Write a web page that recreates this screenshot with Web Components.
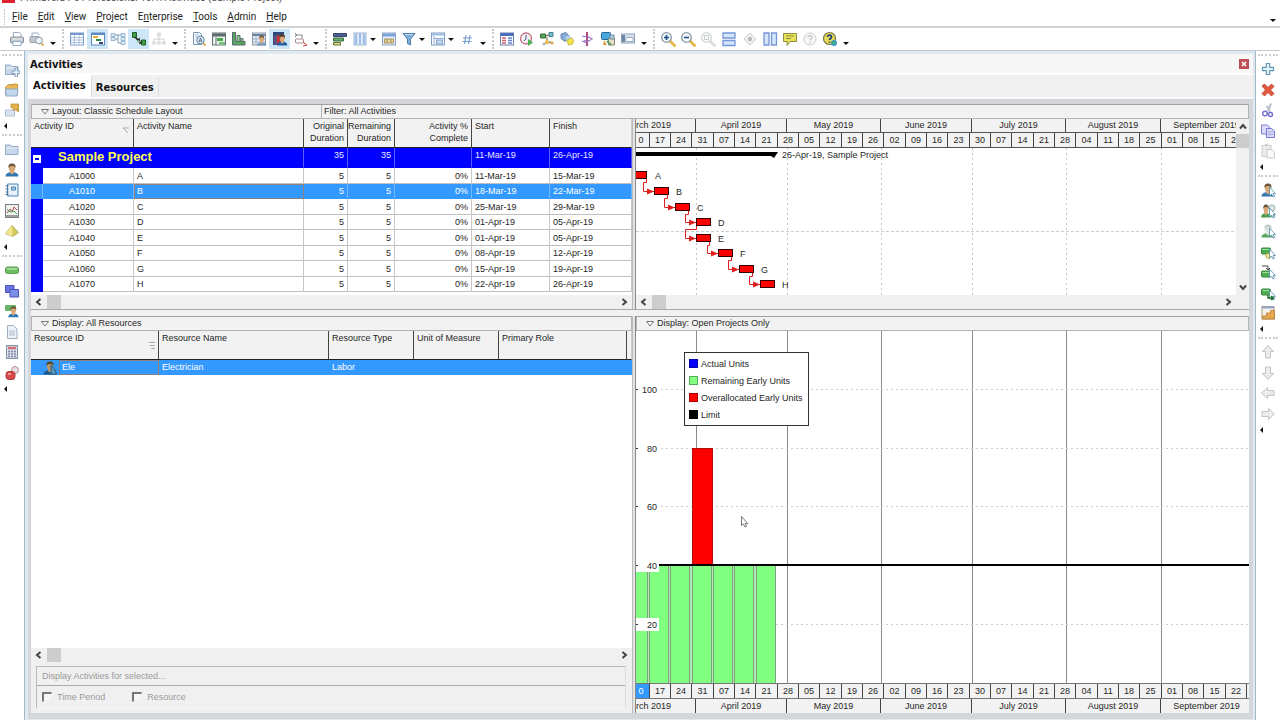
<!DOCTYPE html>
<html lang="en">
<head>
<meta charset="utf-8">
<title>Activities (Sample Project)</title>
<style>
html, body { margin: 0; height: 100%; background: #fff; overflow: hidden; }
body { font: 9px/12px "Liberation Sans", Arial, sans-serif; color: #262626; }
</style>
</head>
<body>
<p6-app></p6-app>
<script>
const define = (name, html, setup) => {
  const t = document.createElement('template');
  customElements.define(name, class extends HTMLElement {
    constructor() {
      super();
      t.innerHTML = t.innerHTML || html;
      this.attachShadow({ mode: 'open' }).append(t.content.cloneNode(true));
    }
    connectedCallback() { if (setup && !this.ready) { this.ready = true; setup(this, this.shadowRoot); } }
  });
};

/* ---------- icons, drawn on a 16 x 16 grid ---------- */
const person = (c = '#2f78b4', f = '#d9a878', h = '#6b5638') =>
  `<path d="M1.500 14.500c0-3 3-4.500 6.500-4.500s6.500 1.500 6.500 4.500z" fill="${c}"/><path d="M6 9h4v2l-2 1.500-2-1.500z" fill="${f}"/><ellipse cx="8" cy="6" rx="3.200" ry="4" fill="${f}"/><path d="M4.500 6C4 2.500 6 1.500 8 1.500s4 1 3.500 4.500C10.500 4 9 4 8 4S5 4.500 4.500 6z" fill="${h}"/>`;
const pointer = '<path d="M9.500 5v9l2-2 1.500 3 1.500-.8-1.400-2.700h2.400z" fill="#fff" stroke="#4a8ca8" stroke-width=".8"/>';
const lens = (c, inner, h = '#e6b84e') => `<path d="M10 10l4.500 4.500" stroke="${h}" stroke-width="3" stroke-linecap="round"/><circle cx="6.500" cy="6.500" r="4.800" fill="#f4fafc" stroke="${c}" stroke-width="1.300"/>${inner}`;
const folder = '<path d="M1.500 4h5l1.500 1.500h6v8h-12.500z" fill="#c8d8ea" stroke="#94aac4"/><path d="M2 7h12" stroke="#e8f0f8"/>';
const arrow = a => `<path transform="rotate(${a} 8 8)" d="M8 1.500l5.500 6h-3v6.500h-5v-6.500h-3z" fill="#ececec" stroke="#c2c2c2"/>`;
const green = '<rect x="1.500" y="4" width="9" height="6" rx="1" fill="#4cae50" stroke="#38843c"/><path d="M2.500 5.500h7" stroke="#a0e0a0"/>';
const ICONS = {
  print: '<path d="M4.500 6V1.500h6L12 3v3" fill="#fff" stroke="#9ab0c8"/><rect x="1.500" y="6" width="13" height="6" rx="1" fill="#c3c8ce" stroke="#8c949c"/><path d="M3 8h10" stroke="#f4f4f4"/><path d="M4 10.500h8v4H4z" fill="#fff" stroke="#8fb0cc"/>',
  preview: '<path d="M3 6V2h6l1 2" fill="#fff" stroke="#9ab0c8"/><rect x="1" y="5.500" width="9" height="6" rx="1" fill="#c3c8ce" stroke="#98a0a8"/><path d="M12 12l2.500 2.500" stroke="#e0b050" stroke-width="2"/><circle cx="10" cy="9.500" r="3.400" fill="#e8f3fa" stroke="#8898a8"/>',
  table: '<rect x="1.500" y="2" width="13" height="12" fill="#fff" stroke="#7c9ac8"/><path d="M2 3h12" stroke="#7898d0" stroke-width="2"/><path d="M2 6.500h12M2 9h12M2 11.500h12M5.500 4v10M10 4v10" stroke="#a9bfe0"/>',
  gantt: '<rect x="1.500" y="2" width="13" height="12" fill="#fff" stroke="#5d88c4"/><path d="M2 3h12" stroke="#5d88c4" stroke-width="2"/><path d="M3 6h5" stroke="#e0b030" stroke-width="2"/><path d="M6 9h5" stroke="#308848" stroke-width="2"/><path d="M9 12h4" stroke="#304878" stroke-width="2"/>',
  network: '<path d="M5 4h3v8h3M8 8H5M8 4h3" fill="none" stroke="#7da0bc"/><path d="M1 2.500h4v3H1zM1 6.500h4v3H1zM11 2.500h4v3h-4zM11 6.500h4v3h-4zM11 10.500h4v3h-4z" fill="#dceaf4" stroke="#88abc6" stroke-width=".8"/>',
  trace: '<path d="M1.500 1.500h4v5h-4z" fill="#41a048" stroke="#205c28"/><path d="M10.500 9h4v5h-4z" fill="#41a048" stroke="#205c28"/><path d="M4 6l3 3 1-1 1 4 2-1" stroke="#222" stroke-width="1.600" fill="none"/><path d="M5.500 11.500l2-3 2 3z" fill="#8cc890"/>',
  org: '<path d="M8 5v4M3 11V8h10v3M8 8v3" stroke="#d2d2d2" fill="none"/><path d="M6 1.500h4v4H6zM1 10.500h4v3H1zM6 10.500h4v3H6zM11 10.500h4v3h-4z" fill="#dedede"/>',
  finddoc: '<path d="M2.500 1.500h6l2 2v10h-8z" fill="#f4f8fc" stroke="#7898b8"/><path d="M4 4h4M4 6h2" stroke="#aac0d8"/><path d="M12 12l2.500 2.500" stroke="#e0b050" stroke-width="2"/><circle cx="9.500" cy="9" r="3.800" fill="#d8ecf8" stroke="#6080a0"/><path d="M8 11l1.500-4 1.500 4M8.500 10h2" stroke="#557" fill="none" stroke-width=".8"/>',
  sheet: '<rect x="1.500" y="2" width="13" height="12" fill="#e8f4e8" stroke="#687078"/><path d="M2 4h12" stroke="#606870" stroke-width="3"/><path d="M5 6v8" stroke="#687078"/><rect x="6" y="7" width="6" height="3" fill="#48a850"/><rect x="8" y="11" width="6" height="2.500" fill="#78c078"/>',
  hist: '<path d="M1.500 1.500h3v9h9.500v3.500H1.500z" fill="#58a860" stroke="#586870"/><path d="M6 4.500h3v6H6zM9.500 7.500h2.500v3H9.500z" fill="#88c890" stroke="#587068"/>',
  resuse: '<rect x="1.500" y="2" width="13" height="12" fill="#e4ecf4" stroke="#8896a8"/><path d="M2 4h12" stroke="#6880a0" stroke-width="2"/><path d="M5 5v9M2 8h12M2 11h12" stroke="#a8b4c4"/><g transform="translate(5 3) scale(.7 .8)">' + person('#789cc0') + '</g>',
  resprof: '<rect x="1.500" y="1.500" width="10" height="12" fill="#c03838" stroke="#304878"/><path d="M2 3h10" stroke="#304878" stroke-width="3"/><path d="M3.500 4v10" stroke="#3858a0" stroke-width="2"/><g transform="translate(4 2) scale(.78 .86)">' + person('#1f5fa8', '#d9a878', '#4b3a28') + '</g>',
  link: '<path d="M3 2l2 2-2 2M3 4h7v4" fill="none" stroke="#888"/><rect x="3.500" y="8" width="8" height="4" rx="1" fill="#fff" stroke="#a88"/><path d="M11 11l4 3-4 1" fill="none" stroke="#c44"/>',
  bars: '<path d="M1.500 2.500h13v3h-13z" fill="#4a5f98" stroke="#3a4468"/><path d="M1.500 7h10v3h-10z" fill="#62b068" stroke="#386840"/><path d="M1.500 11.500h7v2.500h-7z" fill="#e0e070" stroke="#687048"/>',
  cols: '<rect x="2" y="2" width="12" height="12" fill="#dce9f8" stroke="#98b4d4"/><path d="M4 3v10M8 3v10M12 3v10" stroke="#9cbce4" stroke-width="2"/>',
  timescale: '<rect x="1.500" y="2" width="13" height="12" fill="#e8ecf4" stroke="#8ea4c4"/><path d="M2 4h12" stroke="#7ca4dc" stroke-width="3"/><path d="M3.500 8h9v4h-9z" fill="#f4d888" stroke="#a89868"/><path d="M6 8v4M10 8v4" stroke="#888"/>',
  filter: '<path d="M2 2.500h12L9.500 8v6l-3-1.500V8z" fill="#7fb0d8" stroke="#4a7cac"/><path d="M4 3.500h8" stroke="#c4e0f4"/>',
  group: '<rect x="1.500" y="2" width="13" height="12" fill="#fff" stroke="#7c9cc4"/><path d="M2 3.500h12" stroke="#9cbce4" stroke-width="2"/><path d="M4 5v9M4 7.500h10" stroke="#8cacd4"/><rect x="6.500" y="9" width="6" height="4" fill="#c8dcf4" stroke="#7c9cc4"/>',
  hash: '<path d="M7 4L5.500 13M11 4L9.500 13M4 7h9M3.500 10.500H12.500" stroke="#6f9ccc" stroke-width="1.100"/>',
  dict: '<rect x="1.500" y="2" width="13" height="12" fill="#fff" stroke="#6880b0"/><path d="M2 3.500h12" stroke="#4a70b8" stroke-width="3"/><path d="M3 7h4M3 9.500h4M3 12h4" stroke="#d06070" stroke-width="1.500"/><path d="M9 7h4M9 9.500h4M9 12h4" stroke="#6080c8" stroke-width="1.500"/>',
  clock: '<circle cx="7" cy="7.500" r="5.500" fill="#f8ecf0" stroke="#c07080" stroke-width="1.300"/><path d="M7 4v4l-2 2" stroke="#3860a0" fill="none"/><path d="M9 8l5 3.500-5 3.500z" fill="#48b050"/>',
  level: '<path d="M3 5l9-1M8 6v6M4 13l8-2" stroke="#886" stroke-width="1.300"/><path d="M1.500 3h5v4h-5z" fill="#50a858" stroke="#386840"/><path d="M10 1.500h4v4h-4z" fill="#6cc0d8" stroke="#48808c"/><circle cx="8" cy="11" r="2" fill="#f0c050"/><circle cx="13" cy="12" r="1.500" fill="#d8a040"/><circle cx="5" cy="13" r="1.500" fill="#bbb"/>',
  light: '<path d="M2 3l5-1.500 4 5-5 4-4-3z" fill="#88acd8" stroke="#6888b0"/><path d="M6 6l5-2 1 3-4 3z" fill="#b8d0ec"/><path d="M8 9l5-2 1.500 3-1 3-4 1z" fill="#f4e44c" stroke="#ccbc40"/>',
  spread: '<path d="M8 1v14" stroke="#a03868" stroke-width="1.800"/><path d="M3 5l5 1M8 5l5 3-5 3M3 10l5 2M8 9l-3 1" fill="none" stroke="#9a70c8" stroke-width="1.200"/>',
  store: '<rect x="1.500" y="1.500" width="9" height="7" rx="1" fill="#48a8d8" stroke="#2868a0"/><path d="M8.500 7.500h6v6.500h-6z" fill="#e4e0c8" stroke="#887"/><path d="M10 4h4v4h-4z" fill="#b8d0d8" stroke="#68889c"/><path d="M4 9l3 5H3z" fill="#e0a048"/><path d="M7 10l4 4" stroke="#5aa060" stroke-width="2"/>',
  layers: '<rect x="1.500" y="3" width="13" height="9" fill="#d8e2ee" stroke="#8ea2ba"/><path d="M2 4h3v7H2z" fill="#6c88a8"/><path d="M6 6.500h7v4H6z" fill="#fff" stroke="#9cb0c8"/>',
  zoomin: lens('#8a98a0', '<path d="M4 6.500h5M6.500 4v5" stroke="#1f4f88" stroke-width="1.600"/>'),
  zoomout: lens('#8a98a0', '<path d="M4 6.500h5" stroke="#1f4f88" stroke-width="1.600"/>'),
  zoomfit: lens('#d4d4d4', '<rect x="4.500" y="4.500" width="4" height="4" fill="none" stroke="#d0d0d0"/>', '#dedede'),
  hsplit: '<path d="M2 2h12v5H2zM2 9.500h12v5H2z" fill="#d5e5fa" stroke="#7498d8" stroke-width="1.300"/>',
  diamond: '<path d="M8 2l6 6-6 6-6-6z" fill="#f2f2f2" stroke="#ccc"/><circle cx="8" cy="8" r="2.200" fill="#bbb"/>',
  vsplit: '<path d="M2 2h5v12H2zM9.500 2h5v12h-5z" fill="#d5e5fa" stroke="#7498d8" stroke-width="1.300"/>',
  note: '<path d="M1.500 2.500h13v8H8l-3 4v-4H1.500z" fill="#e6e258" stroke="#8c8c48"/><path d="M4 5h8M4 7.500h5" stroke="#8c8c40"/>',
  helpoff: '<circle cx="8" cy="8" r="6" fill="#f8f8f8" stroke="#ccc"/><path d="M6 6.500C6 4 10 4 10 6.500 10 8 8 8 8 9.500M8 11v1.300" stroke="#c2c2c2" fill="none" stroke-width="1.400"/>',
  help: '<circle cx="7.500" cy="7.500" r="6" fill="#e8dc54" stroke="#787850" stroke-width="1.200"/><path d="M5.500 6C5.500 3.500 9.500 3.500 9.500 6 9.500 7.500 7.500 7.500 7.500 9M7.500 10.500v1.300" stroke="#223c80" fill="none" stroke-width="1.700"/><circle cx="12" cy="12" r="3" fill="#3898c8"/><path d="M10 12l2-2 1 2-1 2z" fill="#50b060"/>',
  folderadd: folder + '<path d="M11 7h2.500v3H16v2.500h-2.500V16H11v-3.500H8V10h3z" fill="#e4f0f8" stroke="#6c8cac" stroke-width=".8"/>',
  folderopen: '<path d="M1.500 5l3-2.500h9v10H1.500z" fill="#e8b858" stroke="#c09858"/><path d="M1.500 7h12.500l-1 7H2z" fill="#c5d7ea" stroke="#8ca6c4"/><path d="M8 4l3-2 3 1" stroke="#e0a030" fill="none" stroke-width="1.500"/>',
  folderout: '<path d="M1.500 8h9v6h-9z" fill="#d8e2ee" stroke="#b0c0d4"/><path d="M7 2h7.500v8l-2-1.500V7L10 9 9 5.500 7 6z" fill="#e5b248" stroke="#b88c38" stroke-width=".8"/>',
  folder,
  person: person(),
  book: '<path d="M3.500 2h10.500v12H3.500z" fill="#e8f2fa" stroke="#4c84b4"/><path d="M1.500 4h3M1.500 7h3M1.500 10h3M1.500 12.500h3" stroke="#487090"/><path d="M7.500 5h4v3h-4z" fill="#9cc4e4" stroke="#5888b0"/>',
  report: '<rect x="1.500" y="1.500" width="13" height="13" fill="#eef2ee" stroke="#7c7c84"/><path d="M2 13h12" stroke="#98a098" stroke-width="2"/><path d="M3 10l3-4 2 3 2-5 3 3" fill="none" stroke="#c84848"/><path d="M3 6l3 3 4-1 3 3" fill="none" stroke="#48a060"/>',
  pyramid: '<path d="M8 2.500l6.500 7-6 4-7-3z" fill="#d8cc5c" stroke="#a09a50" stroke-width=".8"/><path d="M8 2.500l.5 11-7-3z" fill="#efe88c"/>',
  activity: '<rect x="1.500" y="5" width="13" height="6.500" rx="2" fill="#6ebc62" stroke="#5a9c50"/><path d="M3 7h10" stroke="#b4e4ac" stroke-width="1.500"/>',
  copyblue: '<path d="M1.500 2.500h8.500v7H1.500z" fill="#6c74e0" stroke="#4a52b8"/><path d="M6 6.500h8.500v7.500H6z" fill="#7c90e8" stroke="#4a52b8"/>',
  assign: '<rect x="1" y="2" width="11" height="6" rx="1" fill="#68b468"/><g transform="translate(3 2) scale(.8 .85)">' + person() + '</g>',
  doc: '<path d="M3.500 1.500h6l3.500 3.500v9.500H3.500z" fill="#edf2f8" stroke="#a0acc0"/><path d="M5 7h6M5 9h6M5 11h6" stroke="#b0bccc"/>',
  calc: '<rect x="2.500" y="1.500" width="11" height="13" fill="#d8dce8" stroke="#8890a4"/><path d="M4 4h8" stroke="#d07078" stroke-width="2.500"/><path d="M4 7.500h8M4 10h8M4 12.500h8" stroke="#8088a4" stroke-width="1.300" stroke-dasharray="2 1"/>',
  risk: '<circle cx="11" cy="5" r="3.500" fill="#e8dce0" stroke="#b89098"/><rect x="2" y="6.500" width="9" height="8" rx="3" fill="#d84848" stroke="#a83838"/><path d="M4 9h3" stroke="#f8b0b0" stroke-width="1.500"/>',
  add: '<path d="M6.300 2.500h3.400v3.800h3.800v3.400H9.700v3.800H6.300V9.700H2.500V6.300h3.800z" fill="#e4f2fa" stroke="#6898b4" stroke-width="1.200"/>',
  del: '<path d="M2 4l2.500-2L8 5.500 11.500 2 14 4.500 10.500 8l3.500 3.500-2.500 2.500L8 10.500 4.500 14 2 11.500 5.500 8z" fill="#e8583c" stroke="#a8402c" stroke-width=".8"/>',
  cut: '<path d="M11 1.500L8 9M7 4l3 6" stroke="#b8bcc4" stroke-width="2"/><circle cx="5" cy="11.500" r="2.300" fill="none" stroke="#7470d0" stroke-width="1.400"/><circle cx="10.500" cy="12.500" r="2" fill="none" stroke="#7470d0" stroke-width="1.400"/>',
  copy: '<path d="M1.500 2h6l2 2v7h-8z" fill="#dcdcfa" stroke="#8080dc"/><path d="M6.500 5.500h5l3 2.500v6.500h-8z" fill="#dcdcfa" stroke="#7474d8"/><path d="M8 9h5M8 11.500h5" stroke="#a0a0e4"/>',
  paste: '<rect x="2" y="2.500" width="9" height="11" fill="#ececec" stroke="#d0d0d0"/><path d="M5 2h3" stroke="#ccc" stroke-width="2"/><path d="M7 6.500h5l2.500 2.500v6H7z" fill="#f8f8f8" stroke="#cdcdcd"/>',
  addres: person() + pointer,
  rowres: person('#1f5a86', '#b89868', '#54482c') + '<path d="M9 5v9h5.500l-2-5z" fill="#5a94b8" stroke="#2a6288"/>',
  addrole: '<g transform="scale(.75 1)">' + person('#4a9850') + '</g><circle cx="12" cy="5" r="3" fill="#dfe8e4" stroke="#98b0a8"/><path d="M8 14c0-5 7-5 7 0z" fill="#58b060"/>' + pointer,
  addrole2: person('#58a860', '#dce4e0', '#c0ccc8') + pointer,
  actcode: green + '<path d="M6 10l4-1 2 3-3 3-3-2z" fill="#f4e890" stroke="#b8a850"/>' + pointer,
  pred: '<g transform="translate(0 3)">' + green + '</g><path d="M2 2h6v4M6 4l2 2 2-2" fill="none" stroke="#484848"/>' + pointer,
  succ: green + pointer + '<path d="M8 10v3h5M11 11l2.500 2-2.500 2" fill="none" stroke="#207028" stroke-width="1.400"/>',
  steps: '<rect x="2" y="1.500" width="12" height="12.500" fill="#f4f2e8" stroke="#b09868"/><path d="M2 2.500h12" stroke="#90a8d4" stroke-width="2"/><path d="M2.500 14v-3h4V8h4V5.500h4V14z" fill="#e8a850" stroke="#b87c38" stroke-width=".8"/>',
  up: arrow(0), down: arrow(180), left: arrow(-90), right: arrow(90)
};

define('ui-icon', `<style>:host{display:block;width:16px;height:16px}svg{display:block}</style><svg width="16" height="16" viewBox="0 0 16 16" aria-hidden="true"></svg>`,
  (el, r) => { r.querySelector('svg').innerHTML = ICONS[el.getAttribute('name')]; });

define('icon-button', `<style>
:host{display:block;flex:none;width:20px;height:20px}
:host([wide]){width:21px}
:host([on]){width:21px}
button{all:unset;box-sizing:border-box;width:100%;height:100%;display:grid;place-items:center}
:host([on]) button{background:#cde6f8}
</style><button type="button"><ui-icon></ui-icon></button>`,
  (el, r) => {
    r.querySelector('ui-icon').setAttribute('name', el.getAttribute('icon'));
    r.querySelector('ui-icon').shadowRoot.querySelector('svg').innerHTML = ICONS[el.getAttribute('icon')];
    r.querySelector('button').setAttribute('aria-label', el.getAttribute('icon'));
  });

/* ---------- bars around the window ---------- */
define('title-strip', `<style>
:host{display:flex;align-items:flex-end;height:6px;overflow:hidden;font:10px/12px Roboto,sans-serif;color:#555;padding-left:2px;gap:5px}
i{width:13px;height:3px;background:#e0202c;align-self:flex-start}
span{padding-bottom:2px}
</style><i></i><span>Primavera P6 Professional 16.1: Activities (Sample Project)</span>`);

define('menu-bar', `<style>
:host{display:flex;align-items:center;height:18px;padding:2px 4px 0;border-bottom:2px solid #d2d2d2;font:10px/14px Roboto,sans-serif;color:#222}
.grip{width:1px;height:16px;border-left:1px dotted #b8b8b8;margin-right:1px}
button{all:unset;padding:0 5px}
u{text-underline-offset:1px}
.more{margin-left:auto;border:3px solid transparent;border-top-color:#111;border-bottom:0;align-self:flex-end;margin-bottom:4px}
</style><span class="grip"></span>
<button><u>F</u>ile</button><button><u>E</u>dit</button><button><u>V</u>iew</button><button><u>P</u>roject</button><button>E<u>n</u>terprise</button><button><u>T</u>ools</button><button><u>A</u>dmin</button><button><u>H</u>elp</button><span class="more"></span>`);

define('tool-bar', `<style>
:host{display:flex;align-items:center;height:22px;padding-left:7px;border-bottom:1px solid #c3cbd0;position:relative}
.sep{flex:none;width:9px;height:20px;display:flex;justify-content:center}
.sep::before{content:"";border-left:2px dotted #ccc}
.caret,.more{flex:none;width:9px;height:20px;display:flex;align-items:center}
.more{width:11px;justify-content:center;align-items:flex-end}
.caret::before,.more::before{content:"";border:3px solid transparent;border-top-color:#111;border-bottom:0}
.more::before{margin-bottom:4px}
</style>`,
  (el, r) => {
    const spec = 'print preview ; | table gantt* network trace* org ; | finddoc sheet hist resuse resprof* link ; | bars cols v timescale filter v group v hash ; | dict clock level light spread store+ layers ; | zoomin zoomout zoomfit hsplit+ diamond+ vsplit note helpoff help ;';
    const box = document.createElement('template');
    box.innerHTML = spec.split(' ').map(s => s === ';' ? '<span class="more"></span>' : s === '|' ? '<span class="sep"></span>' : s === 'v' ? '<span class="caret"></span>'
      : `<icon-button icon="${s.replace(/[*+]/, '')}"${s.endsWith('*') ? ' on' : s.endsWith('+') ? ' wide' : ''}></icon-button>`).join('');
    r.append(box.content);
  });

define('side-dock', `<style>
:host{display:block;flex:none;width:24px;background:#fff}
.grip{height:8px;display:flex;align-items:center;padding:0 2px}
.grip::before{content:"";flex:1;border-top:2px dotted #ccc}
.group icon-button{width:24px}
.group icon-button:nth-child(even){height:21px}
.more{height:11px;display:flex;align-items:center;padding-left:4px}
.more::before{content:"";border:3px solid transparent;border-right-color:#111;border-left:0}
</style>`,
  (el, r) => {
    const box = document.createElement('template');
    box.innerHTML = el.getAttribute('items').split('|').map(g => `<div class="grip"></div><div class="group">${g.trim().split(' ').map(i => `<icon-button icon="${i}"></icon-button>`).join('')}</div><div class="more"></div>`).join('');
    r.append(box.content);
  });

/* ---------- shared parts ---------- */
define('scroll-bar', `<style>
:host{display:flex;align-items:center;height:14px;flex:none;background:#f0f0f0;padding:0 4px;gap:4px}
svg{flex:none;display:block}
path{fill:none;stroke:#444;stroke-width:2}
.thumb{flex:none;width:14px;height:14px;background:#cdcdcd}
.space{flex:1}
:host([vertical]){flex-direction:column;height:auto;width:13px;padding:4px 0;gap:3px}
:host([vertical]) svg{transform:rotate(90deg)}
:host([vertical]) .thumb{width:13px}
</style><svg width="8" height="8"><path d="M5.500 1L2 4l3.500 3"/></svg><div class="thumb"></div><div class="space"></div><svg width="8" height="8"><path d="M2.500 1L6 4 2.500 7"/></svg>`);

define('pane-title', `<style>
:host{display:flex;flex:none;height:15px;border:1px solid #b4b4b4;border-top-color:#a0a0a0;background:#f2f2f2;line-height:13px;box-sizing:border-box}
.main{display:flex;align-items:center;gap:3px;padding-left:9px}
svg{display:block}
</style><div class="main"><svg width="8" height="6"><path d="M.5 .5h7L4 5z" fill="#fff" stroke="#777"/></svg><slot></slot></div><slot name="extra"></slot>`);

define('time-scale', `<style>
:host{display:flex;flex-direction:column;flex:none;overflow:hidden;background:#f2f2f2;color:#262626}
:host([flip]){flex-direction:column-reverse}
.row{display:grid;white-space:nowrap;text-align:center}
.months{grid-template-columns:60px 91px 94px 91px 94px 95px 91px;line-height:13px}
:host([flip]) .months{line-height:14px}
.days{grid-template-columns:14px repeat(9,21px 21px 22px) 21px 21px;line-height:14px;border:solid #555;border-width:1px 0}
:host([flip]) .days{border-color:#777}
.row span{border-right:1px solid #444;overflow:hidden}
.months span:first-child{text-align:left}
.months span:last-child{border:0}
:host([flip]) .days span:first-child{background:#3399ff;color:#fff}
.days span:first-child{padding-right:3px}
</style><div class="row months"></div><div class="row days"></div>`,
  (el, r) => {
    const [m, d] = r.querySelectorAll('.row');
    m.innerHTML = ['rch 2019', 'April 2019', 'May 2019', 'June 2019', 'July 2019', 'August 2019', 'September 2019'].map(t => `<span>${t}</span>`).join('');
    d.innerHTML = '0 17 24 31 07 14 21 28 05 12 19 26 02 09 16 23 30 07 14 21 28 04 11 18 25 01 08 15 22'.split(' ').map(t => `<span>${t}</span>`).join('');
  });

/* ---------- activity table ---------- */
const gridStyle = `
table{border-collapse:separate;border-spacing:0;table-layout:fixed;width:100%;font:inherit;color:inherit}
th,td{padding:0 3px 0 3px;overflow:hidden;white-space:nowrap;box-sizing:border-box;text-align:left;font-weight:normal}
thead th{height:29px;vertical-align:top;background:#f2f2f2;border-right:1px solid #444;border-bottom:1px solid #222;padding-top:1px;white-space:normal}
thead th:last-child{border-right-color:#ccc}
th.n,td.n{text-align:right;padding-left:0}`;
define('activity-table', `<style>
:host{display:block;background:#fff}${gridStyle}
tbody tr{height:15px}
tbody tr:nth-child(even){height:16px}
tbody tr.project{height:20px}
tbody td{border-right:1px solid #c8c8c8;border-bottom:1px solid #c0c0c0;line-height:13px;padding-top:1px}
td.tree{background:#00f;border-color:#00f}
td.id{padding-left:26px}
.project td{background:#00f;color:#e8e8ff;border-bottom-color:#00f;border-right-color:#5a5aff;vertical-align:top;padding-top:1px}
.project td.tree{border-right-color:#00f;vertical-align:middle;padding:2px 0 0 2px}
.project td.name{font:bold 13px/18px "Liberation Sans",Arial,sans-serif;color:#ffff50;padding:0 0 0 15px}
.minus{display:block;width:8px;height:8px;background:#fff;position:relative}
.minus::before{content:"";position:absolute;left:2px;right:2px;top:3px;height:2px;background:#00f}
.sel td,.sel td.tree{background:#3399ff;color:#fff;border-bottom-color:#3399ff;border-right-color:#70b8ff}
.sel td.an{outline:1px solid #8d7f80;outline-offset:-1px}
.mark{float:right;margin:7px 0 0}
</style>
<table><colgroup><col style="width:12px"><col style="width:91px"><col><col style="width:44px"><col style="width:47px"><col style="width:77px"><col style="width:78px"><col style="width:82px"></colgroup>
<thead><tr><th colspan="2"><svg class="mark" width="8" height="8"><path d="M1 1h6M1 1l5 5" stroke="#aaa" fill="none"/></svg>Activity ID</th><th>Activity Name</th><th class="n">Original<br>Duration</th><th class="n">Remaining<br>Duration</th><th class="n">Activity %<br>Complete</th><th>Start</th><th>Finish</th></tr></thead><tbody></tbody></table>`,
  (el, r) => {
    const rows = [['A', '11-Mar-19', '15-Mar-19'], ['B', '18-Mar-19', '22-Mar-19'], ['C', '25-Mar-19', '29-Mar-19'], ['D', '01-Apr-19', '05-Apr-19'], ['E', '01-Apr-19', '05-Apr-19'], ['F', '08-Apr-19', '12-Apr-19'], ['G', '15-Apr-19', '19-Apr-19'], ['H', '22-Apr-19', '26-Apr-19']];
    r.querySelector('tbody').innerHTML = '<tr class="project"><td class="tree"><span class="minus"></span></td><td class="name" colspan="2">Sample Project</td><td class="n">35</td><td class="n">35</td><td></td><td>11-Mar-19</td><td>26-Apr-19</td></tr>'
      + rows.map(([n, s, f], i) => `<tr${i === 1 ? ' class="sel"' : ''}><td class="tree"></td><td class="id">A10${i}0</td><td class="an">${n}</td><td class="n">5</td><td class="n">5</td><td class="n">0%</td><td>${s}</td><td>${f}</td></tr>`).join('');
  });

define('resource-table', `<style>
:host{display:block;flex:1;min-height:0;background:#fff}${gridStyle}
tbody tr{height:15px}
tbody td{background:#3399ff;color:#fff;line-height:13px}
td.id{display:flex;align-items:center;height:15px;padding:0 0 0 11px;overflow:visible}
.id span{flex:1;margin-left:1px;padding-left:3px;outline:1px solid #8d7f80;outline-offset:-1px;line-height:15px}
.mark{float:right;margin:10px 0 0}
</style>
<table><colgroup><col style="width:128px"><col><col style="width:85px"><col style="width:85px"><col style="width:128px"><col style="width:5px"></colgroup>
<thead><tr><th><svg class="mark" width="6" height="8"><path d="M0 .5h6M1 3.500h5M2 6.500h4" stroke="#aaa" fill="none"/></svg>Resource ID</th><th>Resource Name</th><th>Resource Type</th><th>Unit of Measure</th><th>Primary Role</th><th></th></tr></thead>
<tbody><tr><td class="id"><ui-icon name="rowres"></ui-icon><span>Ele</span></td><td>Electrician</td><td>Labor</td><td></td><td></td><td></td></tr></tbody></table>`);

define('usage-filter', `<style>
:host{display:block;flex:none;background:#f0f0f0;padding:4px 6px 4px 5px;color:#9a9a9a}
fieldset{margin:0;padding:0;border:1px solid #bbb;border-right-color:#ddd;border-bottom-color:#f8f8f8;min-width:0}
legend{float:left;box-sizing:border-box;width:100%;padding:0 5px;line-height:18px;border-bottom:1px solid #aaa}
.row{clear:both;display:flex;gap:27px;padding:4px 5px}
label{display:flex;align-items:center;gap:5px;line-height:14px}
input{appearance:none;margin:0;width:10px;height:10px;border:2px solid #777;border-right:1px solid #eee;border-bottom:1px solid #eee;background:#f6f6f6;box-sizing:border-box}
</style><fieldset disabled><legend>Display Activities for selected...</legend><div class="row"><label><input type="checkbox">Time Period</label><label><input type="checkbox">Resource</label></div></fieldset>`);

/* ---------- Gantt chart ---------- */
const MONTHS = [60, 151, 245, 336, 430, 525];
define('gantt-chart', `<style>
:host{display:block;flex:1;min-height:0;background:#fff;overflow:hidden}
svg{display:block;width:100%;height:147px}
text{font:9px "Liberation Sans",Arial,sans-serif;fill:#262626}
</style><svg role="img" aria-label="Gantt chart"></svg>`,
  (el, r) => {
    const bars = [['A', -3, 23], ['B', 18, 39], ['C', 39, 55], ['D', 60, 70], ['E', 60, 86], ['F', 82, 101], ['G', 103, 117], ['H', 124, 132]];
    let s = MONTHS.map(x => `<path d="M${x}.5 0V148" stroke="#c4c4c4" stroke-dasharray="2 3"/>`).join('');
    s += '<path d="M0 83.500H613" stroke="#ccc" stroke-dasharray="3 2"/><path d="M0 4h142l-4 6-3-2H0z"/><text x="146" y="10">26-Apr-19, Sample Project</text>';
    const link = (x, y, bx, by, x2) => `<path d="M${x}.5 ${y}V${y + 3}.5H${x2}.5V${by + 4}.5H${bx}" fill="none" stroke="#e02020"/><path d="M${bx} ${by + 4}.5l-7-3v6z" fill="#e02020"/>`;
    bars.forEach(([n, x, y], i) => {
      const b = bars[i + 1];
      if (b) s += i === 3 ? link(60, y + 8, b[1], b[2], 49) : link(x + 13, y + 8, b[1], b[2], b[1] - 11);
      s += `<rect x="${x}.5" y="${y}.5" width="14" height="7" fill="#f00" stroke="#300"/><text x="${x + 22}" y="${y + 8}">${n}</text>`;
    });
    r.querySelector('svg').innerHTML = s;
  });

/* ---------- resource usage profile ---------- */
define('usage-chart', `<style>
:host{display:block;flex:1;min-height:0;background:#fff;overflow:hidden;position:relative}
svg{display:block;width:100%;height:100%}
text{font:9px "Liberation Sans",Arial,sans-serif;fill:#262626}
ul{position:absolute;left:48px;top:21px;box-sizing:border-box;width:125px;margin:0;padding:2px 4px;list-style:none;background:#fff;border:1px solid #333}
li{display:flex;align-items:center;gap:3px;height:17px;white-space:nowrap}
i{box-sizing:border-box;width:9px;height:9px;border:1px solid #0005}
.pointer{position:absolute;left:105px;top:185px;width:8px;height:12px}
</style><svg class="plot" role="img" aria-label="Resource usage profile"></svg>
<ul><li><i style="background:#00f"></i>Actual Units</li><li><i style="background:#80ff80"></i>Remaining Early Units</li><li><i style="background:#f00"></i>Overallocated Early Units</li><li><i style="background:#000"></i>Limit</li></ul>
<svg class="pointer"><path d="M.5 .5v9l2-1.500 1.500 3 1.500-.7-1.300-2.800h2.500z" fill="#fff" stroke="#555" stroke-width=".8"/></svg>`,
  (el, r) => {
    let s = MONTHS.map(x => `<path d="M${x}.5 0V352" stroke="#8c8c8c"/>`).join('');
    s += [58, 117, 175, 293].map(y => `<path d="M25 ${y}.5H613" stroke="#ccc" stroke-dasharray="2 3"/>`).join('');
    s += '<rect y="234" width="140" height="119" fill="#b4e8b4"/>';
    [-7, 14, 35, 57, 78, 99, 121].forEach(x => { s += `<rect x="${x}" y="234" width="19" height="119" fill="#80ff80"/><path d="M${x - 1}.5 234V353M${x + 18}.5 234V353" stroke="#7f9f7f"/>`; });
    s += '<rect x="56.500" y="117.500" width="20" height="117" fill="#f00" stroke="#b01010"/><rect y="233" width="613" height="2" fill="#000"/>';
    [[100, 58], [80, 117], [60, 175], [40, 234], [20, 293]].forEach(([v, y]) => {
      s += `<rect y="${y - 6}" width="23" height="13" fill="#fff"/><path d="M0 ${y}.5h2" stroke="#333"/><text x="21" y="${y + 4}" text-anchor="end">${v}</text>`;
    });
    r.querySelector('.plot').innerHTML = s;
  });

/* ---------- window ---------- */
define('work-area', `<style>
:host{display:flex;flex-direction:column;flex:1;min-width:0;box-sizing:border-box;border:solid #dfe9f0;border-width:3px 2px 1px 3px;background:#d4d6d9}
.caption,.tabs{flex:none;display:flex;background:#f7f7f7;font:bold 10px/19px "DejaVu Sans",Verdana,sans-serif;color:#111}
.caption{height:21px;align-items:center;padding:1px 4px 0 2px;border-bottom:2px solid #fff;box-sizing:border-box;justify-content:space-between}
.caption button{all:unset;width:10px;height:10px;background:#c05058;display:grid;place-items:center}
.tabs{height:24px;background:#f0f0f0;box-sizing:border-box;border-bottom:2px solid #fafafa;align-items:flex-end}
.tabs button{all:unset;padding:0 4px;line-height:19px;border-right:1px solid #ddd}
.tabs button.on{background:#fff;padding:0 5px;line-height:22px}
.panes{flex:1;min-height:0;display:flex;flex-direction:column;padding:5px 4px 6px 3px}
.pair{display:grid;grid-template-columns:minmax(0,601fr) 4px minmax(0,613fr);background:#f0f0f0}
.bar{background:#e4e4e4;border-right:1px solid #888;border-left:1px solid #bbb;box-sizing:border-box}
.bottom{flex:1;min-height:0}
.col{display:flex;flex-direction:column;min-width:0;min-height:0}
.body{display:grid;grid-template-columns:minmax(0,1fr) 13px;flex:1;min-height:0}
.clip{display:flex;flex-direction:column;min-width:0;overflow:hidden}
.split{flex:none;height:6px;background:#f2f2f2;border-top:1px solid #aaa}
.tall{height:176px;background:#fff;overflow:hidden}
.end{display:grid;grid-template-columns:minmax(0,1fr) 13px;background:#f0f0f0}
.filter{border-left:1px solid #b4b4b4;padding-left:2px}
.lead{width:269px}
</style>
<div class="caption">Activities<button aria-label="Close"><svg width="6" height="6"><path d="M1 1l4 4M5 1L1 5" stroke="#fff" stroke-width="1.500"/></svg></button></div>
<div class="tabs"><button class="on">Activities</button><button>Resources</button></div>
<div class="panes">
<pane-title><span class="lead">Layout: Classic Schedule Layout</span><span class="filter" slot="extra">Filter: All Activities</span></pane-title>
<div class="pair">
 <div class="col"><div class="tall"><activity-table></activity-table></div><scroll-bar></scroll-bar></div>
 <div class="bar"></div>
 <div class="col"><div class="body"><div class="clip"><time-scale></time-scale><gantt-chart></gantt-chart></div><scroll-bar vertical></scroll-bar></div><div class="end"><scroll-bar></scroll-bar></div></div>
</div>
<div class="split"></div>
<div class="pair bottom">
 <div class="col"><pane-title>Display: All Resources</pane-title><resource-table></resource-table><scroll-bar></scroll-bar><usage-filter></usage-filter></div>
 <div class="bar"></div>
 <div class="col"><pane-title>Display: Open Projects Only</pane-title><usage-chart></usage-chart><time-scale flip></time-scale></div>
</div>
</div>`);

define('p6-app', `<style>
:host{display:flex;flex-direction:column;height:100vh;min-height:600px}
main{flex:1;min-height:0;display:flex}
work-area{outline:1px solid #a4b8c6;margin:0 1px;min-height:0}
</style>
<title-strip></title-strip><menu-bar></menu-bar><tool-bar></tool-bar>
<main>
<side-dock items="folderadd folderopen folderout | folder person book report pyramid | activity copyblue assign doc calc risk"></side-dock>
<work-area></work-area>
<side-dock items="add del cut copy paste | addres addrole addrole2 actcode pred succ steps | up down left right"></side-dock>
</main>`);
</script>
</body>
</html>
